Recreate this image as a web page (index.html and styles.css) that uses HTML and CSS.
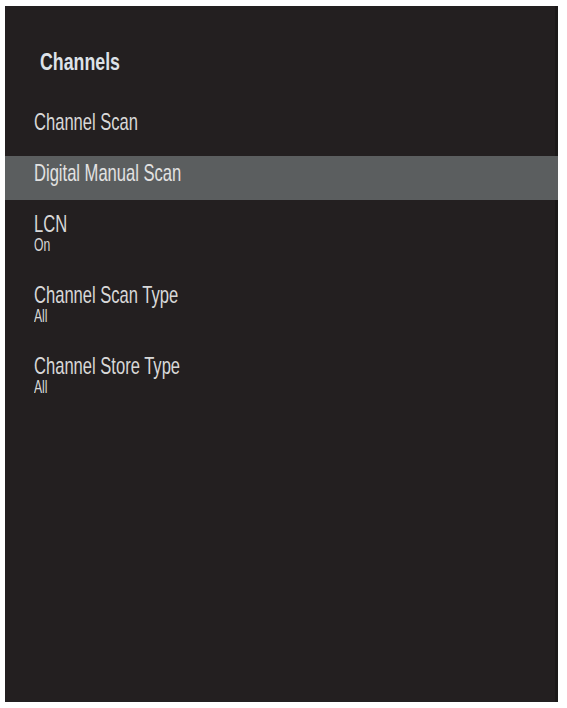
FILE: index.html
```html
<html>
<head>
<title>Channels</title>
<link rel="stylesheet" href="styles.css">
</head>
<body>
<div class="panel">
  <h1 class="title"><span class="txt">Channels</span></h1>
  <ul class="menu">
    <li class="item"><span class="txt">Channel Scan</span></li>
    <li class="item selected"><span class="txt">Digital Manual Scan</span></li>
    <li class="item double">
      <span class="txt">LCN</span>
      <span class="sub"><span class="txt">On</span></span>
    </li>
    <li class="item double">
      <span class="txt">Channel Scan Type</span>
      <span class="sub"><span class="txt">All</span></span>
    </li>
    <li class="item double">
      <span class="txt">Channel Store Type</span>
      <span class="sub"><span class="txt">All</span></span>
    </li>
  </ul>
</div>
</body>
</html>
```

FILE: styles.css
```css
BODY {margin:0;background:#ffffff;font-family:"Liberation Sans",Arial,sans-serif;}

.panel {margin:6px 0 0 5px;width:553px;height:696px;background:#231f20;
  box-shadow:inset -3px 0 0 #1b1919;}

.title {margin:0;padding:44px 0 0 35px;font-size:24px;line-height:24px;
  font-weight:bold;color:#dde2e8;}
.title .txt {transform:scaleX(.74);}

.menu {list-style:none;margin:31px 0 0 0;padding:0;display:flex;flex-direction:column;gap:7px;}
.item {box-sizing:border-box;height:44px;padding:5px 0 0 29px;font-size:24px;line-height:24px;color:#d8d8d8;}
.item.double {height:64px;}
.item.selected {background:#5b5e5f;color:#e2e2e2;}

.txt {display:inline-block;white-space:nowrap;transform:scaleX(.69);transform-origin:0 0;}
.sub {display:block;margin-top:1px;font-size:19px;line-height:16px;}
.sub .txt {transform:scaleX(.64);}
```
